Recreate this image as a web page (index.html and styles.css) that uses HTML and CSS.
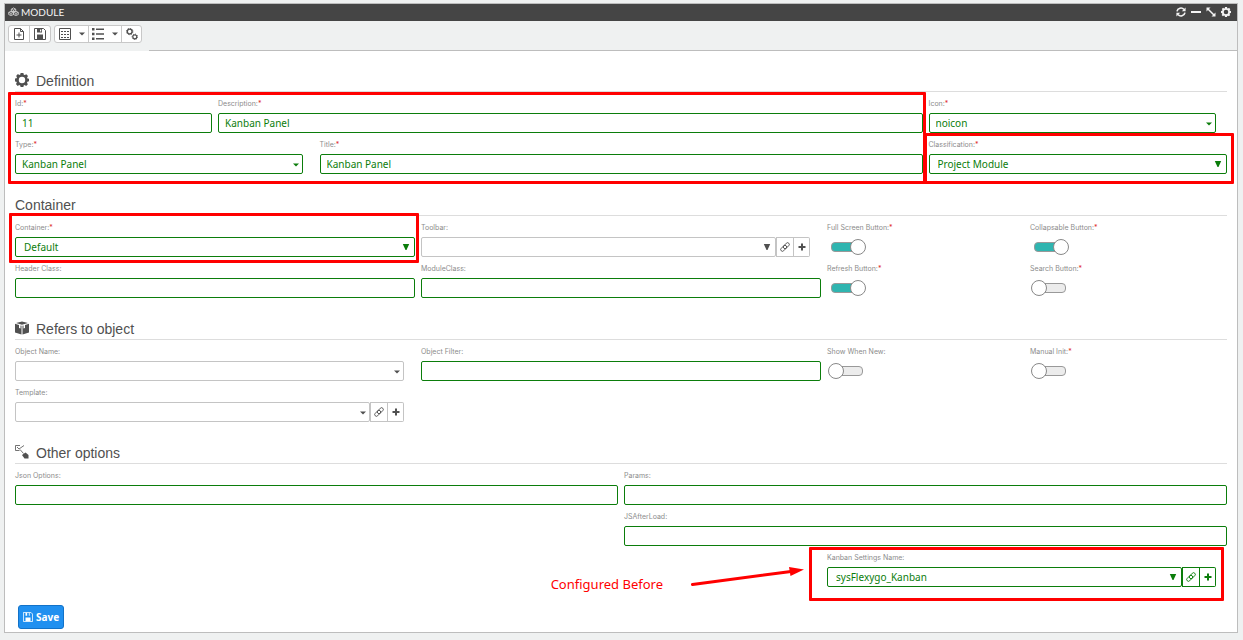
FILE: index.html
```html
<!DOCTYPE html>
<html lang="en">
<head>
<meta charset="utf-8">
<title>Module</title>
<link rel="stylesheet" href="styles.css">
</head>
<body>
<svg class="defs" width="0" height="0" aria-hidden="true">
  <symbol id="gear" viewBox="0 0 14 14"><path fill-rule="evenodd" d="M5.600 0h2.800l.4 1.700 1 .4 1.500-.9 1.700 1.800-.9 1.400.4 1 1.500.3v2.600l-1.600.4-.4 1 .9 1.500-1.800 1.800-1.400-.9-1 .4L8.400 14H5.600l-.4-1.600-1-.4-1.500.9-1.800-1.800.9-1.400-.4-1L0 8.400V5.600l1.600-.3.4-1L1.100 2.900l1.800-1.800 1.400.9 1-.4zM7 3.800a3.200 3.200 0 1 0 0 6.400 3.200 3.200 0 0 0 0-6.400z"/></symbol>
  <symbol id="clip" viewBox="0 0 10 10"><g fill="none" stroke="currentColor" stroke-width=".9"><rect x="2.800" y="2" width="7" height="3.400" rx="1.700" transform="rotate(-45 6.300 3.700)"/><rect x=".2" y="4.600" width="7" height="3.400" rx="1.700" transform="rotate(-45 3.700 6.300)"/></g></symbol>
  <symbol id="plus" viewBox="0 0 8 8"><path d="M3 .5h2V3h2.500v2H5v2.500H3V5H.5V3H3z"/></symbol>
  <symbol id="tri" viewBox="0 0 8 8"><path d="M.8 1h6.400L4.500 7h-1z"/></symbol>
  <symbol id="caret" viewBox="0 0 6 4"><path d="M0 .5h6L3 3.500z"/></symbol>
  <symbol id="disk" viewBox="0 0 12 12"><path fill="none" stroke="currentColor" d="M.5.5h9l2 2v9H.5z"/><path d="M3 1h5v3.500H3zM3 6.500h6V11H3z"/><path class="cut" d="M6 1.500h1.200v2H6z"/></symbol>
</svg>

<main class="panel">
  <header class="titlebar">
    <svg class="ico-title" viewBox="0 0 12 10"><g fill="none" stroke="currentColor"><path d="M3.500 2.500L6 1l2.500 1.500v2L6 5.500 3.500 4.500zM.7 6L3.200 4.700 6 6v2.400L3.200 9.500.7 8.400zM6 6l2.800-1.300L11.300 6v2.400L8.800 9.500 6 8.400zM3.500 2.500L6 3.500l2.500-1M6 3.500v2M.7 6l2.500 1L6 6l2.800 1 2.500-1M3.200 7v2M8.800 7v2"/></g></svg>
    <h1>MODULE</h1>
    <div class="winbtns">
      <button aria-label="Refresh"><svg viewBox="0 0 10 10"><path fill="none" stroke="currentColor" stroke-width="1.600" d="M1 4.300A4 4 0 0 1 8 2.500M9 5.700A4 4 0 0 1 2 7.500"/><path d="M9.600.4v3.800H5.800zM.4 9.600V5.800h3.800z"/></svg></button>
      <button aria-label="Minimize"><svg viewBox="0 0 10 10"><path d="M0 4h10v2H0z"/></svg></button>
      <button aria-label="Expand"><svg viewBox="0 0 10 10"><path stroke="currentColor" stroke-width="1.500" d="M2 2l6 6"/><path d="M.5.500h4L.5 4.500zM9.500 9.500h-4l4-4z"/></svg></button>
      <button aria-label="Settings"><svg viewBox="0 0 14 14"><use href="#gear"/></svg></button>
    </div>
  </header>

  <div class="toolbar">
    <div class="tools">
      <div class="btngroup">
        <button aria-label="New"><svg viewBox="0 0 12 12"><path fill="none" stroke="currentColor" d="M1.500.5h6l3 3v8h-9zM7.500.5v3h3M6 4.500v5M3.500 7h5"/></svg></button>
        <button aria-label="Save"><svg><use href="#disk"/></svg></button>
      </div>
      <div class="btngroup">
        <button class="wide" aria-label="Grid"><svg viewBox="0 0 12 12"><path fill="none" stroke="currentColor" d="M.5.5h11v11H.5z"/><path fill="none" stroke="currentColor" stroke-dasharray="2 1" d="M2 3.500h8M2 6.500h8M2 9.500h8"/></svg><svg class="drop"><use href="#caret"/></svg></button>
        <button class="wide" aria-label="List"><svg viewBox="0 0 12 12"><path d="M0 0h2.500v2.500H0zM0 4.700h2.500v2.500H0zM0 9.500h2.500V12H0zM4 .5h8V2H4zM4 5.200h8v1.500H4zM4 10h8v1.500H4z"/></svg><svg class="drop"><use href="#caret"/></svg></button>
        <button class="cogs" aria-label="Configuration"><svg viewBox="0 0 12 12"><g fill="none" stroke="currentColor"><circle cx="3.700" cy="3.500" r="2.400" stroke-width="1.400"/><circle cx="3.700" cy="3.500" r="3.200" stroke-dasharray="1.200 1.300"/><circle cx="8.800" cy="8.800" r="2" stroke-width="1.200"/><circle cx="8.800" cy="8.800" r="2.700" stroke-dasharray="1 1.100"/></g></svg></button>
      </div>
    </div>
    <div class="toolbar-fill"></div>
  </div>

  <form class="content">
    <section>
      <h2><svg class="h-ico"><use href="#gear"/></svg>Definition</h2>
      <div class="grid">
        <div class="field c2"><label for="id">Id:<i>*</i></label><input id="id" type="text" value="11"></div>
        <div class="field c7"><label for="desc">Description:<i>*</i></label><input id="desc" type="text" value="Kanban Panel"></div>
        <div class="field c3 short"><label for="icon">Icon:<i>*</i></label><div class="pick"><select id="icon"><option>noicon</option></select><svg class="caret"><use href="#caret"/></svg></div></div>
        <div class="field c3 short"><label for="type">Type:<i>*</i></label><div class="pick"><select id="type"><option>Kanban Panel</option></select><svg class="caret"><use href="#caret"/></svg></div></div>
        <div class="field c6"><label for="title">Title:<i>*</i></label><input id="title" type="text" value="Kanban Panel"></div>
        <div class="field c3"><label for="class">Classification:<i>*</i></label><div class="pick native"><select id="class"><option>Project Module</option></select><svg class="tri"><use href="#tri"/></svg></div></div>
        <div class="mark mark-def"></div>
        <div class="mark mark-class"></div>
      </div>
    </section>

    <section>
      <h2>Container</h2>
      <div class="grid">
        <div class="field c4"><label for="cont">Container:<i>*</i></label><div class="pick native"><select id="cont"><option>Default</option></select><svg class="tri"><use href="#tri"/></svg></div></div>
        <div class="field c4 short"><label for="tool">Toolbar:</label><div class="pick native plain"><select id="tool"><option></option></select><svg class="tri"><use href="#tri"/></svg><button type="button" class="link" aria-label="Link"><svg><use href="#clip"/></svg></button><button type="button" class="add" aria-label="Add"><svg><use href="#plus"/></svg></button></div></div>
        <div class="field c2"><label for="full">Full Screen Button:<i>*</i></label><input id="full" type="checkbox" checked></div>
        <div class="field c2"><label for="coll">Collapsable Button:<i>*</i></label><input id="coll" type="checkbox" checked></div>
        <div class="field c4"><label for="head">Header Class:</label><input id="head" type="text"></div>
        <div class="field c4"><label for="modc">ModuleClass:</label><input id="modc" type="text"></div>
        <div class="field c2"><label for="refr">Refresh Button:<i>*</i></label><input id="refr" type="checkbox" checked></div>
        <div class="field c2"><label for="sear">Search Button:<i>*</i></label><input id="sear" type="checkbox"></div>
        <div class="mark mark-cont"></div>
      </div>
    </section>

    <section>
      <h2><svg class="h-ico" viewBox="0 0 14 14"><path d="M7 .5l6 1.500-6 1.800L1 2zM0 2.800l4 1.200v3l1.500.5V4.500l1 .3v8.700L0 11.500zM14 2.800l-4 1.200v3l-1.500.5V4.500l-1 .3v8.700l6.500-2z"/></svg>Refers to object</h2>
      <div class="grid">
        <div class="field c4 short"><label for="objn">Object Name:</label><div class="pick plain"><select id="objn"><option></option></select><svg class="caret"><use href="#caret"/></svg></div></div>
        <div class="field c4"><label for="objf">Object Filter:</label><input id="objf" type="text"></div>
        <div class="field c2"><label for="show">Show When New:</label><input id="show" type="checkbox"></div>
        <div class="field c2"><label for="manu">Manual Init:<i>*</i></label><input id="manu" type="checkbox"></div>
        <div class="field c4 short"><label for="temp">Template:</label><div class="pick plain"><select id="temp"><option></option></select><svg class="caret"><use href="#caret"/></svg><button type="button" class="link" aria-label="Link"><svg><use href="#clip"/></svg></button><button type="button" class="add" aria-label="Add"><svg><use href="#plus"/></svg></button></div></div>
      </div>
    </section>

    <section>
      <h2><svg class="h-ico" viewBox="0 0 14 14"><path fill="none" stroke="currentColor" stroke-width=".8" d="M5 .5H.5v5h4M2 2l2 2L9 .5M5 4.500l3.500 4"/><path d="M7 10l3.500-2.500L13.500 10v3.500H9.500z"/></svg>Other options</h2>
      <div class="grid">
        <div class="field c6"><label for="json">Json Options:</label><input id="json" type="text"></div>
        <div class="field c6"><label for="para">Params:</label><input id="para" type="text"></div>
        <div class="field c6 from7"><label for="jsaf">JSAfterLoad:</label><input id="jsaf" type="text"></div>
        <div class="field c4 short from9"><label for="kanb">Kanban Settings Name:</label><div class="pick native"><select id="kanb"><option>sysFlexygo_Kanban</option></select><svg class="tri"><use href="#tri"/></svg><button type="button" class="link" aria-label="Link"><svg><use href="#clip"/></svg></button><button type="button" class="add" aria-label="Add"><svg><use href="#plus"/></svg></button></div></div>
        <div class="mark mark-kanban"></div>
        <div class="note"><span>Configured Before</span><svg viewBox="0 0 114 22"><path d="M1.500 18.500L100 5.500" fill="none" stroke="currentColor" stroke-width="3" stroke-linecap="round"/><path d="M113 3.500L98 1l1.500 9z"/></svg></div>
      </div>
    </section>
    <button type="submit" class="save"><svg viewBox="0 0 12 12"><path fill="none" stroke="currentColor" d="M.5.5h9l2 2v9H.5z"/><path d="M3 1h2v3.500H3zM7 1h1v3.500H7zM3 6.500h6V11H3z"/></svg>Save</button>
  </form>
</main>
</body>
</html>
```

FILE: styles.css
```css
* { box-sizing: border-box; }

body {
  margin: 0;
  padding: 3px 5px 7px 4px;
  background: #eff1f1;
  color: #505050;
  font-family: "Liberation Sans", Arial, sans-serif;
}

svg { fill: currentColor; display: block; flex: none; }
.defs { position: absolute; }
button { font: inherit; color: inherit; padding: 0; margin: 0; border: 0; background: none; }

.panel { border: 1px solid #bdbdbd; background: #fff; }

/* Title bar */
.titlebar {
  display: flex;
  align-items: center;
  gap: 2px;
  height: 17px;
  padding: 0 6px 2px 3px;
  background: #454545;
  color: #f4f4f4;
}
.titlebar h1 { margin: 0; font: 10px/14px Lato, sans-serif; }
.ico-title { width: 11px; height: 9px; opacity: .8; }
.winbtns { display: flex; gap: 5px; margin-left: auto; }
.winbtns svg { width: 10px; height: 10px; }

/* Toolbar */
.toolbar { display: flex; height: 30px; background: #eff1f1; }
.tools { display: flex; gap: 3px; padding: 4px 7px 7px 3px; }
.toolbar-fill { flex: 1; border-bottom: 1px solid #bdbdbd; }
.btngroup { display: flex; height: 18px; border: 1px solid #c8c8c8; border-radius: 3px; background: #fff; }
.btngroup button { display: flex; align-items: center; justify-content: center; gap: 8px; width: 20px; }
.btngroup button + button { border-left: 1px solid #c8c8c8; width: 21px; }
.btngroup button.wide, .btngroup button.wide + button.wide { width: 33px; }
.btngroup button + button.cogs { width: 20px; }
.btngroup svg { width: 12px; height: 12px; }
.btngroup svg.drop { width: 6px; height: 4px; }
.cut { fill: #fff; }

/* Form sections */
.content { padding: 15px 7px 3px; }
section { margin-bottom: 16px; }
h2 {
  display: flex;
  align-items: center;
  gap: 7px;
  height: 26px;
  margin: 0 3px;
  padding-top: 4px;
  border-bottom: 1px solid #ddd;
  font-size: 14px;
  font-weight: 400;
  line-height: 20px;
}
.h-ico { width: 14px; height: 14px; margin-bottom: 2px; }

.grid { position: relative; display: grid; grid-template-columns: repeat(12, minmax(0, 1fr)); }
.field { padding: 0 3px; min-width: 0; }
.short { padding-right: 14px; }
.c2 { grid-column: span 2; }
.c3 { grid-column: span 3; }
.c4 { grid-column: span 4; }
.c6 { grid-column: span 6; }
.c7 { grid-column: span 7; }
.from7 { grid-column: 7 / span 6; }
.from9 { grid-column: 9 / span 4; }

label { display: block; height: 21px; padding-top: 7px; font: 7px/9px Inter, "Liberation Sans", sans-serif; color: #8c8c8c; white-space: nowrap; }
label i { color: #e03030; font-style: normal; }

input[type="text"], select {
  display: block;
  width: 100%;
  height: 20px;
  margin: 0;
  padding: 0 6px;
  border: 1px solid #0b7d0b;
  border-radius: 2px;
  background: #fff;
  color: #0b7d0b;
  font: 10px/18px "Noto Sans", sans-serif;
  outline: 0;
}
select { appearance: none; flex: 1; min-width: 0; }
.native select { padding-left: 8px; }

.pick { display: flex; color: #0b7d0b; }
.pick > svg { width: 8px; height: 8px; margin: 6px 5px 6px -13px; z-index: 1; pointer-events: none; }
.pick > svg.caret { width: 6px; height: 4px; margin: 9px 4px 7px -10px; }
.pick button { display: flex; align-items: center; justify-content: center; width: 18px; height: 20px; border: 1px solid #0b7d0b; }
.pick .add { width: 16px; border-left: 0; border-radius: 0 2px 2px 0; }
.link svg { width: 10px; height: 10px; }
.add svg { width: 8px; height: 8px; }
.plain { color: #505050; }
.plain select, .plain button { border-color: #c4c4c4; color: #505050; }

/* Toggles */
input[type="checkbox"] { appearance: none; display: block; position: relative; width: 37px; height: 20px; margin: 0; }
input[type="checkbox"]::before {
  content: "";
  position: absolute;
  left: 4px;
  top: 5px;
  width: 30px;
  height: 8px;
  border: 1px solid #999;
  border-radius: 4px;
  background: #ececec;
}
input[type="checkbox"]::after {
  content: "";
  position: absolute;
  left: 1px;
  top: 2px;
  width: 14px;
  height: 14px;
  border: 1px solid #888;
  border-radius: 50%;
  background: #fff;
}
input[type="checkbox"]:checked::before { background: #2fb5b0; }
input[type="checkbox"]:checked::after { left: 23px; }

.save {
  display: flex;
  align-items: center;
  gap: 3px;
  height: 24px;
  margin: 18px 0 0 6px;
  padding: 0 4px;
  border: 1px solid #1272c8;
  border-radius: 3px;
  background: #2090f0;
  color: #fff;
  font: bold 10px/22px "Noto Sans", sans-serif;
}
.save svg { width: 10px; height: 10px; }

/* Highlight frames and callout */
.mark { position: absolute; border: 3px solid #f00; border-radius: 1px; pointer-events: none; }
.mark-def { left: -4px; top: 0; bottom: -10px; width: calc(75% + 4px); }
.mark-class { left: calc(75% - 2px); right: -4px; top: 41px; bottom: -10px; }
.mark-cont { left: -3px; top: -3px; width: calc(33.333% + 4px); height: 50px; }
.mark-kanban { left: calc(66.667% - 15px); right: 6px; bottom: -14px; height: 54px; }
.note {
  position: absolute;
  right: calc(33.333% + 19px);
  bottom: -7px;
  display: flex;
  align-items: flex-end;
  gap: 28px;
  color: #f00;
  font: 13px/20px "Noto Sans", sans-serif;
}
.note svg { width: 114px; height: 22px; margin-bottom: 6px; }
```
